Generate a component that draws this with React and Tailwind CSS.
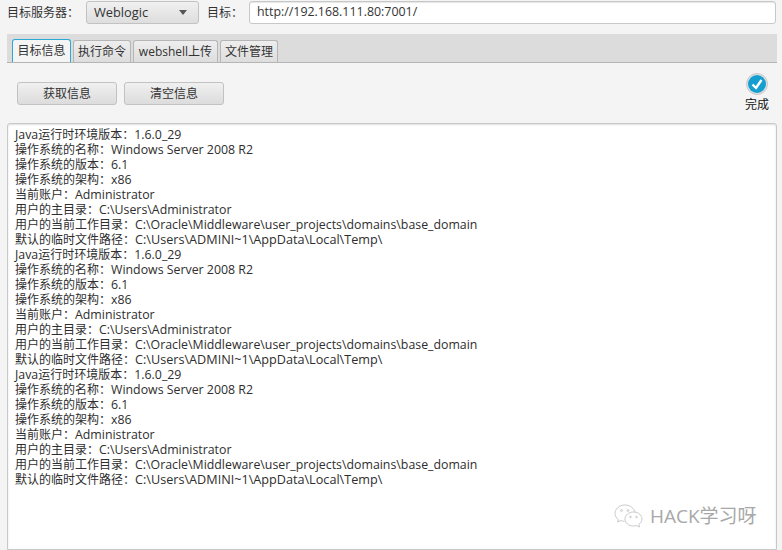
const CJK = { fontFamily: '"Open Sans", "Noto Sans CJK SC", sans-serif' };

const block = [
  "Java运行时环境版本：1.6.0_29",
  "操作系统的名称：Windows Server 2008 R2",
  "操作系统的版本：6.1",
  "操作系统的架构：x86",
  "当前账户：Administrator",
  "用户的主目录：C:\\Users\\Administrator",
  "用户的当前工作目录：C:\\Oracle\\Middleware\\user_projects\\domains\\base_domain",
  "默认的临时文件路径：C:\\Users\\ADMINI~1\\AppData\\Local\\Temp\\",
];
const lines = [...block, ...block, ...block];

function Line({ text }) {
  const parts = text.split(/([\u4e00-\u9fff：]+)/).filter(Boolean);
  const wide = text.includes("ADMINI");
  return (
    <div className="h-[15px] leading-[15px] whitespace-pre text-[#2e2e2e]">
      {parts.map((p, i) =>
        /[\u4e00-\u9fff：]/.test(p) ? (
          <span key={i}>{p}</span>
        ) : (
          <span key={i} className={wide ? "text-[12.65px]" : "text-[12.35px]"}>{p}</span>
        )
      )}
    </div>
  );
}

function Tab({ children, active, w }) {
  return (
    <div
      style={{ width: w }}
      className={
        active
          ? "h-[23px] flex items-center justify-center border-x border-t border-[#29a9d6] rounded-t-[3px] bg-[#f4f4f4] text-[#333]"
          : "h-[22px] flex items-center justify-center border-x border-t border-[#b5b5b5] rounded-t-[3px] bg-gradient-to-b from-[#eeeeee] to-[#dddddd] text-[#333]"
      }
    >
      {children}
    </div>
  );
}

function Btn({ children }) {
  return (
    <button className="w-[100px] h-[23px] flex items-center justify-center rounded-[3px] border border-[#c2c2c2] bg-gradient-to-b from-[#f0f0f0] to-[#dcdcdc] text-[#333] text-[12px]">
      {children}
    </button>
  );
}

export default function App() {
  return (
    <div className="relative w-[782px] h-[550px] overflow-hidden bg-[#f4f4f4] text-[12px] text-[#333]" style={CJK}>
      <div className="flex items-center h-[24px] pl-[7px] pt-px">
        <span className="w-[79px]">目标服务器：</span>
        <div className="w-[113px] h-[23px] flex items-center justify-between pl-[7px] pr-[11px] rounded-[3px] border border-[#c2c2c2] bg-gradient-to-b from-[#f0f0f0] to-[#dedede] text-[12.8px]">
          <span>Weblogic</span>
          <svg width="8" height="5" viewBox="0 0 8 5">
            <path d="M0 0H8L4 5Z" fill="#555" />
          </svg>
        </div>
        <span className="ml-[8px] w-[42px]">目标：</span>
        <div className="w-[527px] h-[23px] flex items-center pl-[7px] rounded-[3px] border border-[#c8c8c8] bg-white text-[12.4px] shadow-[inset_0_1px_1px_#e6e6e6]">
          http://192.168.111.80:7001/
        </div>
      </div>

      <div className="mt-[10px] ml-[7px] w-[770px] h-[29px] flex items-end gap-[2px] pl-[5px] bg-[#dcdcdc] border-b border-[#b5b5b5]">
        <Tab active w={59}>目标信息</Tab>
        <Tab w={58}>执行命令</Tab>
        <Tab w={85}>webshell上传</Tab>
        <Tab w={58}>文件管理</Tab>
      </div>

      <div className="flex h-[60px] pl-[17px] pr-[13px]">
        <div className="flex gap-[7px] pt-[19px]">
          <Btn>获取信息</Btn>
          <Btn>清空信息</Btn>
        </div>
        <div className="ml-auto flex flex-col items-center pt-[10px]">
          <svg width="22" height="22" viewBox="0 0 22 22">
            <circle cx="11" cy="11" r="10.5" fill="#e0e0e0" stroke="#c9c9c9" />
            <circle cx="11" cy="11" r="9" fill="#159fd1" />
            <path d="M6.5 11.5L10 15L15.5 7" fill="none" stroke="#fff" strokeWidth="2.4" />
          </svg>
          <span className="text-[#111] leading-[15px] mt-[2px]">完成</span>
        </div>
      </div>

      <div className="ml-[7px] w-[770px] h-[427px] rounded-t-[3px] border border-[#c8c8c8] bg-white pt-[3px] pl-[7px] shadow-[inset_0_1px_2px_#e0e0e0]">
        {lines.map((l, i) => (
          <Line key={i} text={l} />
        ))}
      </div>

      <div className="absolute left-[613px] top-[503px] flex items-center gap-[5px] text-[#a8a8a8] text-[19px] leading-[26px]">
        <svg width="32" height="26" viewBox="0 0 32 26" fill="none" stroke="#bdbdbd" strokeWidth="0.8">
          <path d="M12 2C6 2 2 6 2 10.5C2 13 3.2 15 5.3 16.5L4.5 19L7.5 17.6C8.7 18 10 18.2 11.5 18.2" />
          <path d="M22 9.5C21.2 5 17 2 12 2" />
          <path d="M20.5 9C15.5 9 12 12.3 12 16C12 19.8 15.5 23 20.5 23C21.6 23 22.6 22.8 23.5 22.5L26.5 24L25.8 21.5C27.8 20.2 29 18.2 29 16C29 12.3 25.5 9 20.5 9Z" />
          <circle cx="8.5" cy="7.5" r="0.9" />
          <circle cx="15" cy="7.5" r="0.9" />
          <circle cx="17.5" cy="14" r="0.8" />
          <circle cx="23.5" cy="14" r="0.8" />
        </svg>
        <span>HACK学习呀</span>
      </div>
    </div>
  );
}
